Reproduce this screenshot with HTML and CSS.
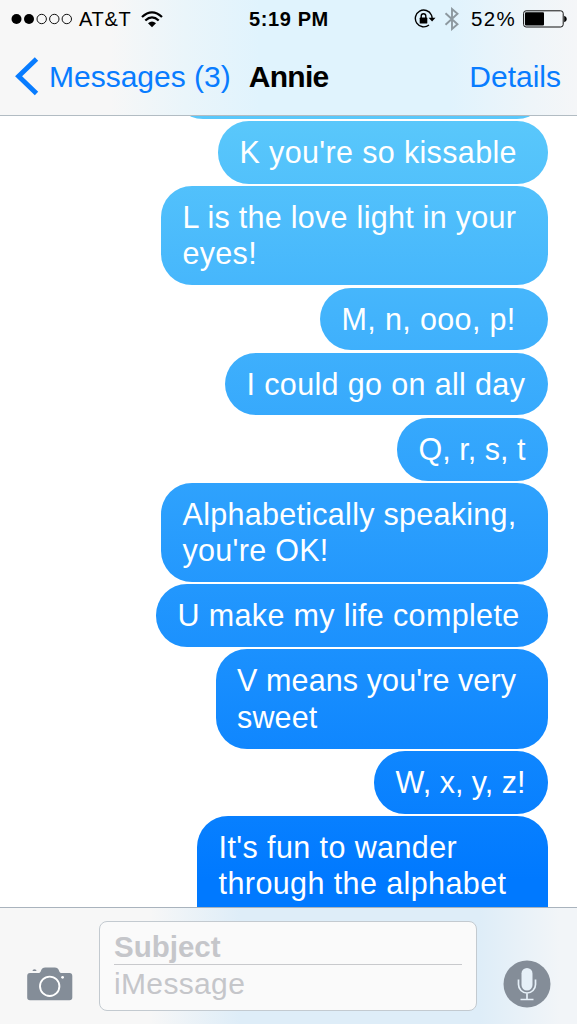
FILE: index.html
```html
<!DOCTYPE html>
<html lang="en">
<head>
    <meta charset="UTF-8">
    <meta name="viewport" content="width=device-width, initial-scale=1.0">
    <title>Messages - Annie</title>
    <link rel="stylesheet" href="styles.css">
</head>
<body>
    <div class="phone">

        <header class="header">
            <div class="status">
                <div class="status-left">
                    <svg class="signal" width="62" height="12" viewBox="0 0 62 12">
                        <circle cx="5.5" cy="6" r="5"/>
                        <circle cx="18" cy="6" r="5"/>
                        <g fill="none" stroke="#111" stroke-width="1">
                            <circle cx="30.7" cy="6" r="4.7"/>
                            <circle cx="43.3" cy="6" r="4.7"/>
                            <circle cx="55.8" cy="6" r="4.7"/>
                        </g>
                    </svg>
                    <span class="carrier">AT&amp;T</span>
                    <svg class="wifi" width="22" height="17" viewBox="0 0 22 17">
                        <g fill="none" stroke="#000" stroke-width="2.3">
                            <path d="M1 6Q11-3.200 21 6"/>
                            <path d="M4.300 9.500Q11 3.300 17.700 9.500"/>
                        </g>
                        <path d="M7 12.200Q11 8.800 15 12.200L11 16.200Z"/>
                    </svg>
                </div>
                <div class="time">5:19 PM</div>
                <div class="status-right">
                    <svg class="lock" width="22" height="20" viewBox="0 0 22 20">
                        <path d="M17.400 6A8.400 8.400 0 1 0 15 16" fill="none" stroke="#000" stroke-width="1.400"/>
                        <path d="M17.400 6Q18.200 7.600 18.100 10" fill="none" stroke="#000" stroke-width="1.400"/>
                        <path d="M14.600 8.700h6.900L18.100 12.600Z"/>
                        <rect x="5.700" y="8.600" width="7.600" height="5.900" rx=".6"/>
                        <path d="M7.200 9V7.100a2.300 2.300 0 0 1 4.600 0V9" fill="none" stroke="#000" stroke-width="1.400"/>
                    </svg>
                    <svg class="bluetooth" width="16" height="24" viewBox="0 0 16 24">
                        <path d="M1.500 6.200L13.500 17.200L8 22V2L13.500 6.800L1.500 17.800" fill="none" stroke="#8d989f" stroke-width="1.900"/>
                    </svg>
                    <span class="percent">52%</span>
                    <svg class="battery" width="44" height="18" viewBox="0 0 44 18">
                        <rect x=".6" y=".8" width="39.600" height="16.200" rx="2.500" fill="none" stroke="#111"/>
                        <rect x="2" y="2.200" width="19" height="13.400" rx="1"/>
                        <path d="M41.200 5.800Q43.800 6.500 43.800 9T41.200 12.200Z"/>
                    </svg>
                </div>
            </div>
            <nav class="nav">
                <a class="back">
                    <svg width="24" height="40" viewBox="0 0 24 40">
                        <path d="M21.500 2L3.600 19.300L21.500 36.600" fill="none" stroke="#087cff" stroke-width="4.900"/>
                    </svg>
                    <span>Messages (3)</span>
                </a>
                <h1 class="title">Annie</h1>
                <a class="details">Details</a>
            </nav>
        </header>

        <main class="thread">
            <div class="bubble bubble-j"></div>
            <div class="bubble bubble-k">K you're so kissable</div>
            <div class="bubble bubble-l">L is the love light in your<br>eyes!</div>
            <div class="bubble bubble-m">M, n, ooo, p!</div>
            <div class="bubble bubble-i">I could go on all day</div>
            <div class="bubble bubble-q">Q, r, s, t</div>
            <div class="bubble bubble-a">Alphabetically speaking,<br>you're OK!</div>
            <div class="bubble bubble-u">U make my life complete</div>
            <div class="bubble bubble-v">V means you're very<br>sweet</div>
            <div class="bubble bubble-w">W, x, y, z!</div>
            <div class="bubble bubble-fun">It's fun to wander<br>through the alphabet</div>
        </main>

        <footer class="compose">
            <svg class="camera" width="46" height="34" viewBox="0 0 46 34">
                <path d="M3 6H11.500Q13 6 13.700 4.500L14.500 2.500Q15.500 .4 18 .4H28Q30.500 .4 31.500 2.500L32.300 4.500Q33 6 34.500 6H42.500Q45.300 6 45.300 9V30.500Q45.300 33.300 42.500 33.300H3Q.2 33.300 .2 30.500V9Q.2 6 3 6Z" fill="#848d98"/>
                <path d="M5.500 3.900Q5.500 2.300 7.500 2.300Q9.500 2.300 9.500 3.900Z" fill="#848d98"/>
                <circle cx="22.700" cy="19.300" r="9.700" fill="none" stroke="#fff" stroke-width="1.900"/>
                <circle cx="35.600" cy="10.300" r="1.400" fill="#fff"/>
            </svg>
            <div class="field">
                <div class="subject">Subject</div>
                <div class="message">iMessage</div>
            </div>
            <svg class="mic" width="48" height="48" viewBox="0 0 48 48">
                <circle cx="24" cy="24" r="23.500" fill="#848d98"/>
                <rect x="18.500" y="8" width="11" height="22.500" rx="5.500" fill="#e6f0f8"/>
                <path d="M15.500 19.500V24.500a8.500 8.500 0 0 0 17 0V19.500M24 33V39M17.500 39.500H30.500" fill="none" stroke="#e6f0f8" stroke-width="1.700"/>
            </svg>
        </footer>

    </div>
</body>
</html>
```
FILE: styles.css
```css
* {
    box-sizing: border-box;
}
body {
    margin: 0;
    background-color: #fff;
    font-family: "Liberation Sans", Arial, Helvetica, sans-serif;
}
.phone {
    width: 577px;
    height: 1024px;
    display: flex;
    flex-direction: column;
    overflow: hidden;
}
svg {
    display: block;
    flex: none;
}

/* header */
.header {
    height: 116px;
    flex: none;
    background: linear-gradient(to right, #f7f7f7 110px, #eaf5fa 185px, #e0f3fd 260px, #e0f3fd 450px, #eef5f9 530px, #f5f6f8 577px);
    border-bottom: 1px solid #b2bcc3;
}
.status {
    height: 38px;
    display: grid;
    grid-template-columns: 1fr auto 1fr;
    align-items: center;
    padding: 0 10px 0 11px;
    font-size: 20px;
    line-height: 38px;
}
.status-left, .status-right {
    display: flex;
    align-items: center;
}
.status-right {
    justify-content: flex-end;
}
.carrier {
    margin-left: 6px;
    letter-spacing: 0.7px;
}
.wifi {
    margin-left: 10px;
}
.time {
    font-weight: bold;
    letter-spacing: 0.6px;
}
.bluetooth {
    margin-left: 8px;
}
.percent {
    margin-left: 11px;
    font-size: 20.5px;
    letter-spacing: 1.3px;
}
.battery {
    margin-left: 7px;
}
.nav {
    height: 77px;
    display: flex;
    align-items: center;
    padding: 0 16px 0 15px;
    font-size: 30px;
}
.back {
    display: flex;
    align-items: center;
    gap: 10px;
    color: #087cff;
}
.title {
    margin: 0 0 0 18px;
    font-size: 30px;
    letter-spacing: -0.7px;
}
.details {
    margin-left: auto;
    color: #087cff;
}

/* messages */
.thread {
    height: 791px;
    flex: none;
    display: flex;
    flex-direction: column;
    align-items: flex-end;
    gap: 2.3px;
    padding-right: 29px;
    overflow: hidden;
}
.bubble {
    flex: none;
    padding: 13px 0 13.4px 21.6px;
    border-radius: 31px;
    background: linear-gradient(to bottom, #5ac8fb 116px, #0079ff 880px) fixed;
    color: #fff;
    font-size: 30.5px;
    line-height: 36.4px;
    letter-spacing: 0.35px;
    white-space: nowrap;
}
.bubble-j {
    width: 376px;
    height: 62.7px;
    margin-top: -60px;
}
.bubble-k { width: 330px; }
.bubble-l {
    width: 387px;
    letter-spacing: 0.28px;
}
.bubble-m { width: 228px; }
.bubble-i { width: 323px; }
.bubble-q {
    width: 151px;
    letter-spacing: 0;
}
.bubble-a {
    width: 387px;
    letter-spacing: 0.28px;
}
.bubble-u { width: 392px; }
.bubble-v {
    width: 332.5px;
    letter-spacing: 0.1px;
}
.bubble-w {
    width: 174px;
    letter-spacing: 0;
}
/* runs on below the compose bar */
.bubble-fun {
    width: 351px;
    height: 136px;
    letter-spacing: 0.4px;
}

/* compose bar */
.compose {
    height: 117px;
    flex: none;
    display: flex;
    align-items: flex-end;
    padding: 0 26px 13px 27px;
    border-top: 1px solid #a9b3bd;
    background: linear-gradient(to right, #f7f7f7 150px, #deedf8 240px, #deedf8 480px, #f2f5f8 560px);
}
.camera {
    margin-bottom: 10px;
}
.field {
    width: 378px;
    height: 90px;
    margin-left: 26px;
    padding: 8px 14px 0;
    border: 1px solid #c3cad0;
    border-radius: 8px;
    background-color: #fafafa;
    color: #c5c6ca;
    font-size: 30px;
}
.subject {
    height: 35px;
    border-bottom: 1px solid #c8c9cc;
    font-size: 29.5px;
    font-weight: bold;
    line-height: 34px;
}
.message {
    line-height: 38px;
    letter-spacing: 0.35px;
}
.mic {
    margin-left: auto;
    margin-bottom: 3px;
}
```
